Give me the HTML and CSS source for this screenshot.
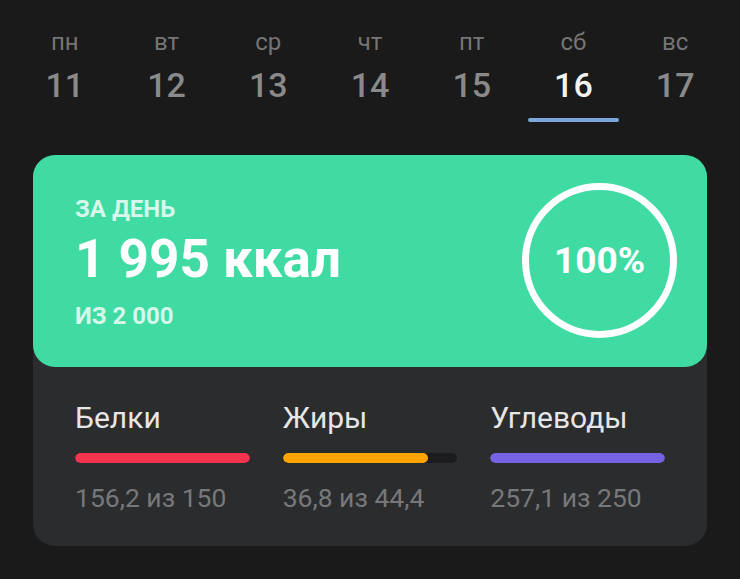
FILE: index.html
```html
<!DOCTYPE html>
<html lang="ru">
<head>
<meta charset="utf-8">
<link rel="stylesheet" href="styles.css">
</head>
<body>
<div class="days">
  <div class="day"><span class="dname">пн</span><span class="dnum">11</span></div>
  <div class="day"><span class="dname">вт</span><span class="dnum">12</span></div>
  <div class="day"><span class="dname">ср</span><span class="dnum">13</span></div>
  <div class="day"><span class="dname">чт</span><span class="dnum">14</span></div>
  <div class="day"><span class="dname">пт</span><span class="dnum">15</span></div>
  <div class="day active"><span class="dname">сб</span><span class="dnum">16</span><span class="mark"></span></div>
  <div class="day"><span class="dname">вс</span><span class="dnum">17</span></div>
</div>
<div class="card">
  <div class="summary">
    <div class="totals">
      <div class="label">ЗА ДЕНЬ</div>
      <div class="kcal">1 995 ккал</div>
      <div class="goal">ИЗ 2 000</div>
    </div>
    <div class="ring">100%</div>
  </div>
  <div class="macros">
    <div class="macro">
      <div class="mname">Белки</div>
      <div class="track"><div class="fill red" style="width:100%"></div></div>
      <div class="mval">156,2 из 150</div>
    </div>
    <div class="macro">
      <div class="mname">Жиры</div>
      <div class="track"><div class="fill orange" style="width:83%"></div></div>
      <div class="mval">36,8 из 44,4</div>
    </div>
    <div class="macro">
      <div class="mname">Углеводы</div>
      <div class="track"><div class="fill purple" style="width:100%"></div></div>
      <div class="mval">257,1 из 250</div>
    </div>
  </div>
</div>
</body>
</html>
```
FILE: styles.css
```css
* { box-sizing: border-box; }
html, body { margin: 0; padding: 0; }
body {
  background: #1a1a1a;
  font-family: Roboto, "Noto Sans", sans-serif;
  width: 740px;
  height: 579px;
  overflow: hidden;
}
.days {
  display: grid;
  grid-template-columns: repeat(7, 1fr);
  padding: 28px 14px 0;
  height: 155px;
}
.day {
  display: flex;
  flex-direction: column;
  align-items: center;
}
.dname {
  font-size: 24px;
  line-height: 28px;
  color: #757575;
}
.dnum {
  margin-top: 9px;
  font-size: 34px;
  line-height: 40px;
  font-weight: 500;
  color: #8a8a8a;
}
.day.active .dnum { color: #f2f2f2; }
.mark {
  margin-top: 13px;
  width: 91px;
  height: 4px;
  border-radius: 2px;
  background: #7aa7dc;
}
.card {
  margin: 0 33px;
  background: #2b2c2e;
  border-radius: 22px;
}
.summary {
  height: 212px;
  background: #3fdba3;
  border-radius: 22px;
  display: flex;
  justify-content: space-between;
  align-items: center;
  padding: 0 30px 0 42px;
}
.totals {
  align-self: flex-start;
  padding-top: 40px;
}
.label {
  font-size: 24px;
  line-height: 28px;
  font-weight: 700;
  color: #d6f7ea;
}
.kcal {
  margin-top: 6px;
  font-size: 53px;
  line-height: 60px;
  font-weight: 700;
  color: #ffffff;
}
.goal {
  margin-top: 13px;
  font-size: 24px;
  line-height: 28px;
  font-weight: 700;
  color: #d6f7ea;
}
.ring {
  width: 155px;
  height: 155px;
  border: 7px solid #ffffff;
  border-radius: 50%;
  display: flex;
  align-items: center;
  justify-content: center;
  font-size: 37px;
  font-weight: 700;
  color: #ffffff;
  margin-top: -2px;
}
.macros {
  display: grid;
  grid-template-columns: repeat(3, 1fr);
  column-gap: 33px;
  padding: 34px 42px 33px;
}
.mname {
  font-size: 30px;
  line-height: 34px;
  color: #e6e6e6;
}
.track {
  margin-top: 18px;
  height: 10px;
  border-radius: 5px;
  background: #1c1c1e;
  overflow: hidden;
}
.fill { height: 100%; border-radius: 5px; }
.red { background: #f7344d; }
.orange { background: #ffa400; }
.purple { background: #7462e0; }
.mval {
  margin-top: 20px;
  font-size: 26.5px;
  line-height: 30px;
  color: #77787a;
}
```
